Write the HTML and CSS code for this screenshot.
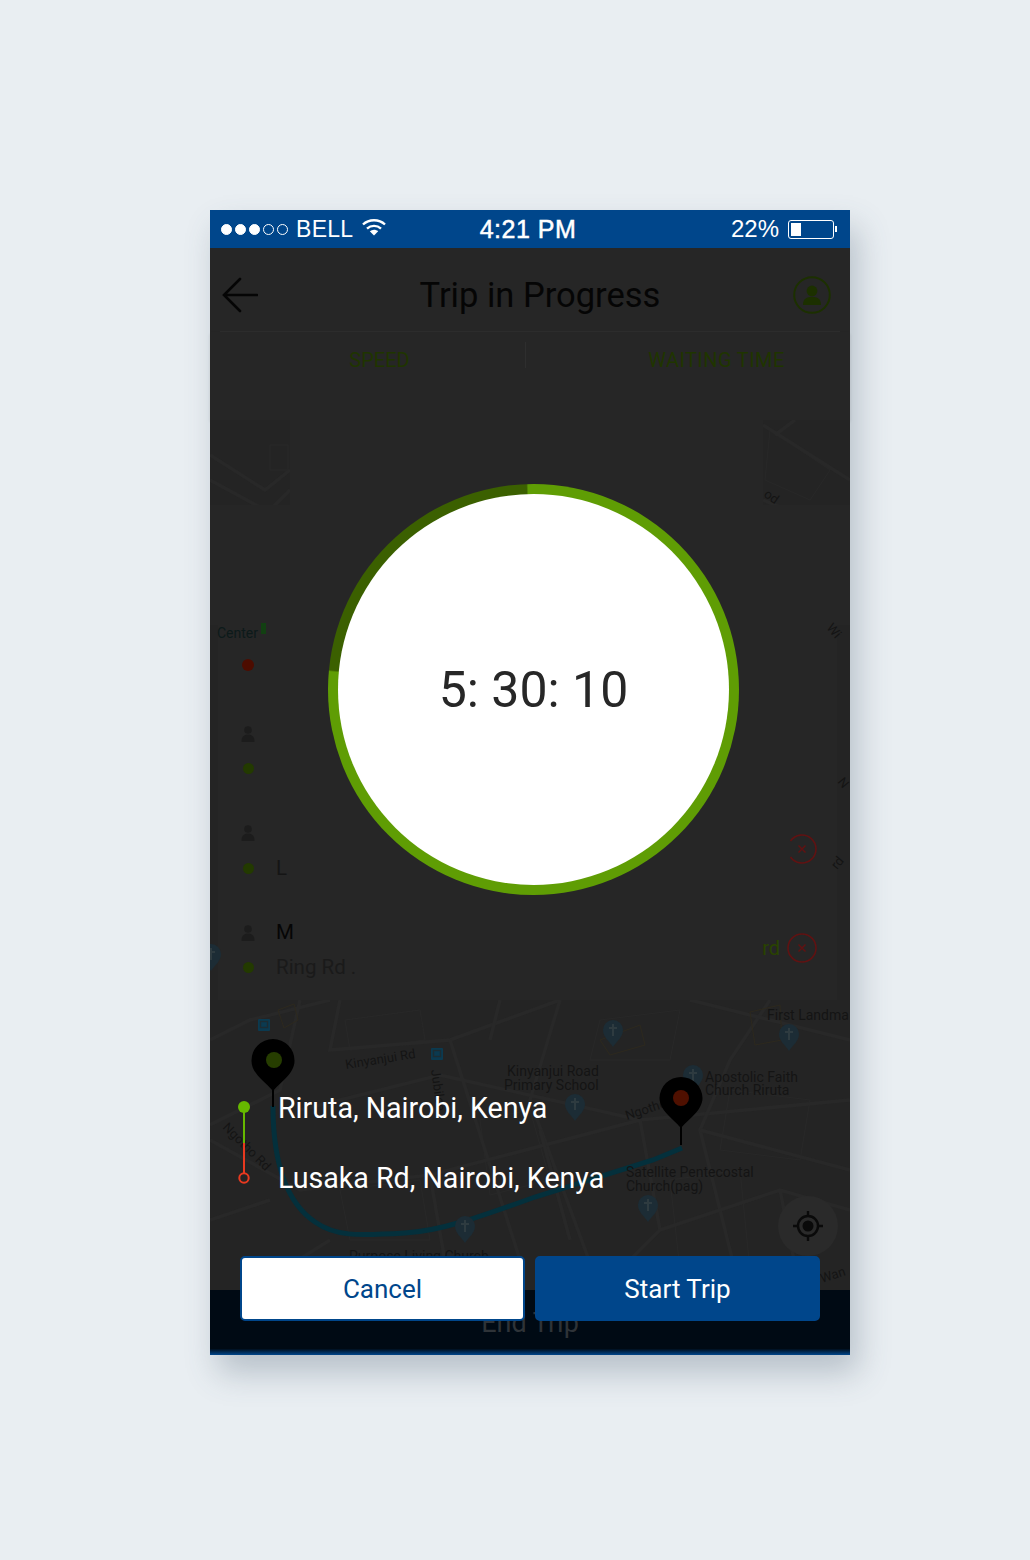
FILE: index.html
```html
<!DOCTYPE html>
<html lang="en">
  <head>
    <meta charset="UTF-8" />
    <meta name="viewport" content="width=device-width, initial-scale=1.0" />
    <title>Trip in Progress</title>
    <link rel="stylesheet" href="styles.css">
  </head>
  <body>
    <div class="phone">
      <!-- status bar -->
      <div class="status-bar">
        <div class="status-left">
          <span class="signal">
            <i class="on"></i><i class="on"></i><i class="on"></i><i></i><i></i>
          </span>
          <span class="carrier">BELL</span>
          <svg class="wifi" width="24" height="18" viewBox="0 0 24 18">
            <path d="M1 6.500C7 0.800 17 0.800 23 6.500" fill="none" stroke="#fff" stroke-width="2.400" />
            <path d="M5 10.600C9 7 15 7 19 10.600" fill="none" stroke="#fff" stroke-width="2.400" />
            <path d="M7.800 13.200C10.400 11.200 13.600 11.200 16.200 13.200L12 17.600Z" fill="#fff" />
          </svg>
        </div>
        <div class="clock">4:21 PM</div>
        <div class="status-right">
          <span>22%</span>
          <span class="battery"><b></b></span>
          <span class="battery-tip"></span>
        </div>
      </div>

      <!-- header -->
      <div class="top-bar">
        <svg class="back" width="36" height="36" viewBox="0 0 36 36">
          <path d="M35 18H3M18 2L2 18L18 34" fill="none" stroke="#050505" stroke-width="2.600" stroke-linecap="round" />
        </svg>
        <h1>Trip in Progress</h1>
        <svg class="profile" width="38" height="38" viewBox="0 0 38 38">
          <circle cx="19" cy="19" r="17.800" fill="none" stroke="#1c3000" stroke-width="2" />
          <circle cx="19" cy="15" r="5.400" fill="#1c3000" />
          <path d="M10 29C10 22.500 14 21 19 21C24 21 28 22.500 28 29Z" fill="#1c3000" />
        </svg>
      </div>
      <div class="stats">
        <div class="stat stat-speed">SPEED</div>
        <div class="stat stat-wait">WAITING TIME</div>
      </div>

      <!-- map with the trip list under the dimmer -->
      <div class="map">
        <svg class="map-art" width="640" height="870" viewBox="210 420 640 870">
          <defs>
            <g id="poi">
              <path d="M0 14C-4 8 -10 4 -10 -3A10 10 0 0 1 10 -3C10 4 4 8 0 14Z" fill="#1c2c35" />
              <path d="M-1 -9H1V-6H4V-4H1V3H-1V-4H-4V-6H-1Z" fill="#2e3b40" />
            </g>
            <g id="bus">
              <rect x="-6" y="-6" width="12" height="12" rx="1" fill="#0b3a50" />
              <rect x="-3.500" y="-3.500" width="7" height="6" fill="none" stroke="#1c2c33" stroke-width="1.400" />
            </g>
          </defs>

          <g class="roads">
            <path d="M210 455L265 490L290 470M210 480L265 510M290 490L270 510M763 425L850 480M795 420L775 435M763 500L810 520" />
            <path d="M210 1040L250 1020L330 1000M300 1000L280 1090L210 1125M340 1000L330 1050L450 1040L560 1000" />
            <path d="M450 1040L520 1260M560 1000L530 1100L600 1290M300 1110L440 1075L640 1120L850 1100" />
            <path d="M210 1140L300 1190L430 1175L640 1120M640 1120L660 1230L600 1290M770 1000L730 1060L700 1130L740 1290" />
            <path d="M700 1130L850 1170M660 1230L780 1190L850 1210M250 1290L330 1240M430 1175L450 1290M780 1190L800 1290" />
            <path d="M500 1000L490 1040M210 1220L270 1200M690 1000L850 1040M540 1130L570 1240" />
          </g>
          <g class="roads-thin">
            <path d="M345 1020L420 1010L425 1040L350 1050ZM600 1020L680 1010L670 1060L590 1060ZM730 1090L810 1100L800 1160L720 1150Z" />
            <path d="M480 1120L530 1110L550 1180L490 1195ZM670 1180L740 1170L750 1270L680 1270ZM340 1190L420 1180L430 1240L350 1240Z" />
            <path d="M770 430L830 470L810 500L765 480ZM270 445H288V470H270Z" />
          </g>
          <g class="buildings">
            <path d="M278 1010L294 1004L298 1020L284 1028ZM600 1040L640 1025L645 1045L610 1055ZM750 1012L780 1005L782 1040L755 1045Z" />
          </g>

          <!-- blocks the dialog dims over the map -->
          <path class="panel" d="M290 420H763V505H850V625H837V1000H218V625H210V505H290Z" />

          <path class="route" d="M273 1106C273 1170 290 1205 315 1222C335 1236 355 1236 405 1233C440 1231 480 1217 535 1197L653 1160L682 1148" />

          <text class="label center-label" x="217" y="638">Center</text>
          <rect x="261" y="623" width="5" height="11" fill="#124012" />
          <text class="label" x="346" y="1069" transform="rotate(-9 346 1069)">Kinyanjui Rd</text>
          <text class="label" x="222" y="1128" transform="rotate(45 222 1128)">Ngotho Rd</text>
          <text class="label" x="431" y="1070" transform="rotate(82 431 1070)">Jubilee</text>
          <text class="label" x="627" y="1120" transform="rotate(-18 627 1120)">Ngotho</text>
          <text class="label" x="822" y="1283" transform="rotate(-18 822 1283)">Wan</text>
          <text class="label" x="763" y="496" transform="rotate(35 763 496)">od</text>
          <text class="label" x="826" y="628" transform="rotate(50 826 628)">Wi</text>
          <text class="label" x="837" y="782" transform="rotate(50 837 782)">N</text>
          <text class="label" x="837" y="870" transform="rotate(-50 837 870)">rd</text>
          <text class="label place" x="767" y="1020">First Landma</text>
          <text class="label place" x="507" y="1076">Kinyanjui Road</text>
          <text class="label place" x="504" y="1090">Primary School</text>
          <text class="label place" x="705" y="1082">Apostolic Faith</text>
          <text class="label place" x="705" y="1095">Church Riruta</text>
          <text class="label place" x="626" y="1177">Satellite Pentecostal</text>
          <text class="label place" x="626" y="1191">Church(pag)</text>
          <text class="label place" x="349" y="1261">Purpose Living Church</text>

          <use href="#poi" x="789" y="1037" />
          <use href="#poi" x="648" y="1208" />
          <use href="#poi" x="465" y="1229" />
          <use href="#poi" x="575" y="1107" />
          <use href="#poi" x="613" y="1033" />
          <use href="#poi" x="693" y="1078" />
          <use href="#poi" x="211" y="957" />
          <use href="#bus" x="264" y="1025" />
          <use href="#bus" x="437" y="1054" />

          <!-- start and end pins -->
          <path d="M273 1039A21.500 21.500 0 0 1 294.500 1061C294.500 1073 282 1081 273 1091C264 1081 251.500 1073 251.500 1061A21.500 21.500 0 0 1 273 1039Z" fill="#000" />
          <path d="M273 1090V1107" stroke="#000" stroke-width="2" />
          <circle cx="274" cy="1060" r="8" fill="#263d00" />
          <path d="M681 1077A21.500 21.500 0 0 1 702.500 1098C702.500 1110 690 1118 681 1128C672 1118 659.500 1110 659.500 1098A21.500 21.500 0 0 1 681 1077Z" fill="#000" />
          <path d="M681 1127V1145" stroke="#000" stroke-width="2" />
          <circle cx="681" cy="1098" r="8" fill="#4f1000" />
        </svg>

        <div class="trip-list">
          <div class="trip-row-first">
            <span class="dot dot-red"></span>
          </div>
          <div class="trip-row">
            <span class="cell-icon"><svg class="person" width="14" height="16" viewBox="0 0 14 16"><circle cx="7" cy="4" r="3.800" /><path d="M0.500 16C0.500 10.500 3 8.500 7 8.500C11 8.500 13.500 10.500 13.500 16Z" /></svg></span>
            <span class="cell-text"></span>
            <span class="cell-icon"><span class="dot dot-green"></span></span>
            <span class="cell-text"></span>
          </div>
          <div class="trip-row">
            <span class="cell-icon"><svg class="person" width="14" height="16" viewBox="0 0 14 16"><circle cx="7" cy="4" r="3.800" /><path d="M0.500 16C0.500 10.500 3 8.500 7 8.500C11 8.500 13.500 10.500 13.500 16Z" /></svg></span>
            <span class="cell-text"></span>
            <span class="cell-icon"><span class="dot dot-green"></span></span>
            <span class="cell-text faint-dark">L</span>
            <svg class="cancel-icon" width="30" height="30" viewBox="0 0 30 30"><path d="M3.500 7A14 14 0 1 1 3.500 23" fill="none" stroke="#601212" stroke-width="1.600" /><path d="M11.500 11.500L18.500 18.500M18.500 11.500L11.500 18.500" stroke="#601212" stroke-width="1.500" /></svg>
          </div>
          <div class="trip-row">
            <span class="cell-icon"><svg class="person" width="14" height="16" viewBox="0 0 14 16"><circle cx="7" cy="4" r="3.800" /><path d="M0.500 16C0.500 10.500 3 8.500 7 8.500C11 8.500 13.500 10.500 13.500 16Z" /></svg></span>
            <span class="cell-text dark">M</span>
            <span class="cell-icon"><span class="dot dot-green"></span></span>
            <span class="cell-text faint">Ring Rd .</span>
            <span class="rd">rd</span>
            <svg class="cancel-icon" width="30" height="30" viewBox="0 0 30 30"><circle cx="15" cy="15" r="14" fill="none" stroke="#601212" stroke-width="1.600" /><path d="M11.500 11.500L18.500 18.500M18.500 11.500L11.500 18.500" stroke="#601212" stroke-width="1.500" /></svg>
          </div>
        </div>

        <div class="locate">
          <svg width="32" height="32" viewBox="0 0 32 32">
            <circle cx="16" cy="16" r="10" fill="none" stroke="#0a0a0a" stroke-width="2.400" />
            <circle cx="16" cy="16" r="5.500" fill="#0a0a0a" />
            <path d="M16 1V6M16 26V31M1 16H6M26 16H31" stroke="#0a0a0a" stroke-width="2.400" />
          </svg>
        </div>
      </div>

      <div class="end-bar">End Trip</div>

      <!-- timer dialog over the dimmed screen -->
      <div class="dialog">
        <div class="timer-ring">
          <div class="timer-face">5: 30: 10</div>
        </div>
        <div class="route-info">
          <svg class="route-marks" width="12" height="83" viewBox="0 0 12 83">
            <circle cx="6" cy="6" r="6" fill="#66b800" />
            <path d="M6 10V42" stroke="#66b800" stroke-width="2" />
            <path d="M6 42V73" stroke="#e8391f" stroke-width="2" />
            <circle cx="6" cy="77" r="4.700" fill="none" stroke="#e8391f" stroke-width="2" />
          </svg>
          <div class="route-names">
            <div>Riruta, Nairobi, Kenya</div>
            <div>Lusaka Rd, Nairobi, Kenya</div>
          </div>
        </div>
        <div class="actions">
          <button class="btn btn-cancel">Cancel</button>
          <button class="btn btn-start">Start Trip</button>
        </div>
      </div>
    </div>
  </body>
</html>
```

FILE: styles.css
```css
* {
  box-sizing: border-box;
}
body {
  margin: 0;
  height: 1560px;
  padding-top: 210px;
  background: #e9eef2;
  font-family: Roboto, Arial, sans-serif;
  overflow: hidden;
}
.phone {
  position: relative;
  display: flex;
  flex-direction: column;
  width: 640px;
  height: 1145px;
  margin-left: 210px;
  background: #262626;
  box-shadow: 8px 18px 30px rgba(70, 90, 110, 0.3);
}

/* status bar */
.status-bar {
  display: grid;
  grid-template-columns: 1fr auto 1fr;
  align-items: center;
  height: 38px;
  padding: 0 13px 0 11px;
  background: #00468b;
  color: #fff;
  font-family: "Liberation Sans", Arial, sans-serif;
  font-size: 24px;
}
.status-left {
  display: flex;
  align-items: center;
}
.signal {
  display: flex;
  gap: 3px;
  margin-right: 8px;
}
.signal i {
  width: 11px;
  height: 11px;
  border: 1px solid #fff;
  border-radius: 50%;
}
.signal i.on {
  background: #fff;
}
.carrier {
  font-size: 23px;
  letter-spacing: 0.3px;
}
.wifi {
  margin-left: 9px;
  margin-top: -4px;
}
.clock {
  margin-right: 2px;
  font-size: 25px;
  letter-spacing: 0.5px;
  -webkit-text-stroke: 0.5px #fff;
}
.status-right {
  display: flex;
  align-items: center;
  justify-content: flex-end;
}
.battery {
  width: 46px;
  height: 19px;
  margin-left: 9px;
  padding: 2px;
  border: 1px solid #fff;
  border-radius: 3px;
}
.battery b {
  display: block;
  width: 10px;
  height: 100%;
  background: #fff;
}
.battery-tip {
  width: 2px;
  height: 6px;
  margin-left: 1px;
  background: #fff;
}

/* header */
.top-bar {
  position: relative;
  display: flex;
  align-items: center;
  justify-content: space-between;
  height: 84px;
  margin: 0 10px;
  padding: 10px 0 0 2px;
  border-bottom: 1px solid #2d2d2d;
}
.top-bar h1 {
  position: absolute;
  left: 20px;
  right: 0;
  margin: 0;
  padding-top: 1px;
  text-align: center;
  font-size: 34.5px;
  font-weight: 400;
  color: #050505;
}
.profile {
  margin-right: 9px;
}
.stats {
  position: relative;
  display: flex;
  height: 88px;
  padding-top: 10px;
  background: #262626;
  box-shadow: 0 2px 3px rgba(0, 0, 0, 0.1);
  font-size: 20px;
  color: #1f3500;
}
.stat {
  height: 26px;
  line-height: 36px;
  text-align: center;
}
.stat-speed {
  width: 316px;
  padding-left: 24px;
  border-right: 1px solid #2e2e2e;
}
.stat-wait {
  flex: 1;
  padding-left: 57px;
  letter-spacing: 0.4px;
}

/* map */
.map {
  position: relative;
  flex: 1;
  overflow: hidden;
  background: #242424;
}
.map-art {
  position: absolute;
  left: 0;
  top: 0;
}
.roads path {
  fill: none;
  stroke: #282828;
  stroke-width: 3.500;
}
.roads-thin path {
  fill: none;
  stroke: #282828;
  stroke-width: 1;
}
.buildings path {
  fill: none;
  stroke: #2d291e;
  stroke-width: 1;
}
.panel {
  fill: #262626;
}
.route {
  fill: none;
  stroke: #04303c;
  stroke-width: 5;
}
.label {
  font-size: 13px;
  fill: #141414;
}
.place {
  font-size: 14px;
}
.center-label {
  fill: #0c1a1a;
  font-size: 14px;
}

/* trip list behind the dialog */
.trip-list {
  position: absolute;
  top: 205px;
  left: 0;
  width: 100%;
}
.trip-row-first {
  display: flex;
  align-items: center;
  height: 75px;
  padding: 5px 0 0 32px;
}
.trip-row {
  position: relative;
  display: grid;
  grid-template-columns: 66px 1fr;
  grid-auto-rows: 35px;
  height: 99.500px;
  padding-top: 16px;
}
.cell-icon {
  display: flex;
  align-items: center;
  justify-content: center;
  width: 76px;
}
.cell-text {
  font-size: 20.500px;
  line-height: 35px;
}
.dark {
  color: #050505;
}
.faint-dark {
  color: #151515;
}
.faint {
  color: #1a1a1a;
}
.dot {
  width: 11px;
  height: 11px;
  border-radius: 50%;
}
.dot-red {
  width: 12px;
  height: 12px;
  background: #4d0c00;
}
.dot-green {
  background: #233a00;
}
.person {
  fill: #1c1c1c;
}
.cancel-icon {
  position: absolute;
  right: 33px;
  top: 34px;
}
.rd {
  position: absolute;
  right: 70px;
  top: 37px;
  font-size: 20px;
  color: #294300;
}
.locate {
  position: absolute;
  right: 12px;
  bottom: 34px;
  display: flex;
  align-items: center;
  justify-content: center;
  width: 60px;
  height: 60px;
  border-radius: 50%;
  background: #2a2a2a;
}

/* bottom bar */
.end-bar {
  height: 65px;
  padding-top: 17px;
  background: linear-gradient(#000a14 90%, #00468b);
  color: #2e3338;
  font-size: 27px;
  text-align: center;
}

/* dialog */
.dialog {
  position: absolute;
  left: 0;
  top: 0;
  right: 0;
  padding-top: 274px;
}
.timer-ring {
  display: flex;
  align-items: center;
  justify-content: center;
  width: 411px;
  height: 411px;
  margin-left: 118px;
  border-radius: 50%;
  background: conic-gradient(#5f9d04 0deg 275deg, #3b6000 275.5deg 358deg, #5f9d04 358.5deg);
}
.timer-face {
  display: flex;
  align-items: center;
  justify-content: center;
  width: 391px;
  height: 391px;
  border-radius: 50%;
  background: #fff;
  color: #272727;
  font-size: 50px;
}
.route-info {
  display: flex;
  align-items: center;
  gap: 28px;
  margin-top: 194.500px;
  padding-left: 28px;
}
.route-names {
  display: flex;
  flex-direction: column;
  gap: 34px;
  color: #fff;
  font-size: 28.600px;
  line-height: 36px;
}
.actions {
  display: flex;
  gap: 10px;
  margin-top: 60.500px;
  padding: 0 30px;
}
.btn {
  flex: 1;
  height: 65px;
  padding: 0;
  border: 2px solid #00468b;
  border-radius: 5px;
  font-family: inherit;
  font-size: 26px;
}
.btn-cancel {
  background: #fff;
  color: #00468b;
}
.btn-start {
  background: #00468b;
  color: #fff;
}
```
